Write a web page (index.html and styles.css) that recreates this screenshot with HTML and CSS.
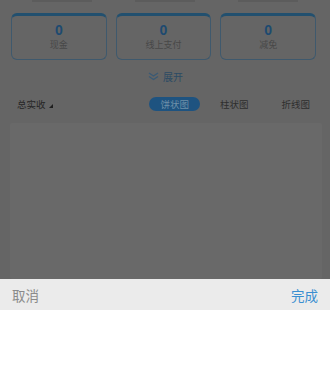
FILE: index.html
```html
<!DOCTYPE html>
<html lang="zh">
<head>
<meta charset="utf-8">
<title>统计</title>
<link rel="stylesheet" href="styles.css">
</head>
<body>
<div class="screen">
  <div class="page">
    <div class="topstrip">
      <i class="seg"></i><i class="seg"></i><i class="seg"></i>
    </div>
    <div class="cards">
      <div class="card"><div class="num">0</div><div class="lbl">现金</div></div>
      <div class="card"><div class="num">0</div><div class="lbl">线上支付</div></div>
      <div class="card"><div class="num">0</div><div class="lbl">减免</div></div>
    </div>
    <div class="expand">
      <svg class="chev" width="11" height="9" viewBox="0 0 11 9"><path d="M1 1 L5.5 4 L10 1 M1 4.5 L5.5 7.5 L10 4.5" fill="none" stroke="#3a5a75" stroke-width="1.3"/></svg>
      <span>展开</span>
    </div>
    <div class="toolbar-row">
      <div class="metric">总实收 <span class="tri"></span></div>
      <div class="tabs">
        <span class="tab active">饼状图</span>
        <span class="tab">柱状图</span>
        <span class="tab">折线图</span>
      </div>
    </div>
    <div class="chart"></div>
  </div>
  <div class="picker">
    <div class="picker-bar">
      <span class="cancel">取消</span>
      <span class="done">完成</span>
    </div>
    <div class="picker-body"></div>
  </div>
</div>
</body>
</html>
```
FILE: styles.css
```css
* { box-sizing: border-box; }
html, body { margin: 0; padding: 0; }
body {
  width: 330px;
  height: 368px;
  overflow: hidden;
  font-family: "Noto Sans CJK SC", "Noto Sans", sans-serif;
  background: #fff;
}
.screen {
  display: flex;
  flex-direction: column;
  height: 368px;
}
.page {
  background: #656565;
  height: 279px;
  display: flex;
  flex-direction: column;
  overflow: hidden;
}
.topstrip {
  height: 4px;
  display: flex;
  justify-content: space-around;
  align-items: flex-start;
  padding: 0 10px;
}
.topstrip .seg {
  display: block;
  width: 60px;
  height: 2px;
  background: #5c5c5c;
}
.cards {
  display: grid;
  grid-template-columns: repeat(3, 1fr);
  gap: 9px;
  padding: 9px 14px 0 11px;
}
.card {
  height: 47px;
  border: 1px solid #3f596d;
  border-top: 3px solid #22506f;
  border-radius: 6px;
  display: flex;
  flex-direction: column;
  align-items: center;
  padding-top: 7px;
}
.num {
  font-family: "Liberation Sans", sans-serif;
  font-weight: bold;
  font-size: 14px;
  line-height: 15px;
  color: #1d4a70;
}
.lbl {
  font-size: 9px;
  line-height: 12px;
  margin-top: 1px;
  color: #484848;
}
.expand {
  display: flex;
  justify-content: center;
  align-items: center;
  gap: 4px;
  margin-top: 9px;
  height: 14px;
  font-size: 10px;
  color: #2c4b64;
  padding-left: 1px;
}
.chev { margin-top: 1px; }
.toolbar-row {
  display: flex;
  align-items: center;
  justify-content: space-between;
  margin-top: 13px;
  height: 16px;
  padding: 0 20px 0 17px;
}
.metric {
  font-size: 9.5px;
  color: #262626;
  display: flex;
  align-items: center;
  gap: 3px;
}
.tri {
  width: 0; height: 0;
  border-left: 4px solid transparent;
  border-bottom: 4px solid #1e1e1e;
  margin-top: 3px;
}
.tabs {
  display: flex;
  align-items: center;
  gap: 20px;
}
.tabs .tab {
  font-size: 9.5px;
  color: #2e2e2e;
  line-height: 14px;
}
.tabs .tab:nth-child(3) { margin-left: 13px; }
.tabs .tab.active {
  background: #1e5380;
  color: #6f90a9;
  border-radius: 8px;
  padding: 0 11px;
  height: 14px;
}
.chart {
  margin: 11px 8px 0 10px;
  flex: 1;
  background: #696969;
  border-radius: 2px;
}
.picker {
  flex: 1;
  display: flex;
  flex-direction: column;
}
.picker-bar {
  height: 31px;
  background: #ebebeb;
  display: flex;
  align-items: center;
  justify-content: space-between;
  padding: 0 12px;
  font-size: 13.5px;
}
.cancel { color: #8a8a8a; }
.done { color: #3b8fd1; }
.picker-body { flex: 1; background: #fff; }
```
